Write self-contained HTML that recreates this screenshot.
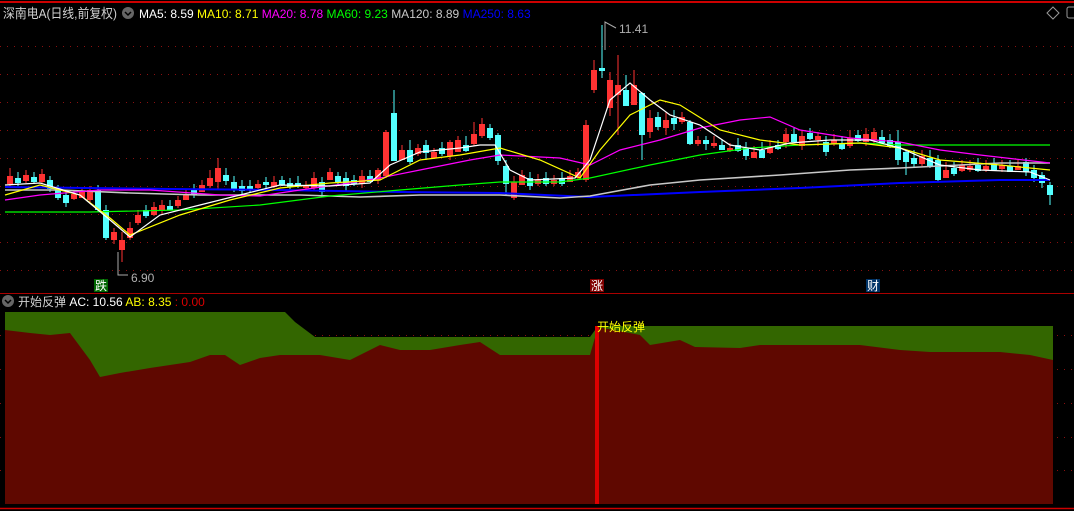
<!DOCTYPE html>
<html><head><meta charset="utf-8"><style>
html,body{margin:0;padding:0;background:#000;width:1074px;height:511px;overflow:hidden}
svg{display:block}
text{font-family:"Liberation Sans","Noto Sans CJK SC",sans-serif}
.r{fill:#ff3232}.c{fill:#54ffff}
</style></head><body>
<svg width="1074" height="511" xmlns="http://www.w3.org/2000/svg">
<rect width="1074" height="511" fill="#000"/>
<line x1="0" y1="2" x2="1074" y2="2" stroke="#c00" stroke-width="2"/>
<g stroke="#8a1010" stroke-width="1" stroke-dasharray="1,6">
<line x1="0" y1="46.5" x2="1074" y2="46.5"/><line x1="0" y1="74.5" x2="1074" y2="74.5"/>
<line x1="0" y1="102.5" x2="1074" y2="102.5"/><line x1="0" y1="130.5" x2="1074" y2="130.5"/>
<line x1="0" y1="158.5" x2="1074" y2="158.5"/><line x1="0" y1="186.5" x2="1074" y2="186.5"/>
<line x1="0" y1="214.5" x2="1074" y2="214.5"/><line x1="0" y1="242.5" x2="1074" y2="242.5"/>
<line x1="0" y1="270.5" x2="1074" y2="270.5"/>
<line x1="0" y1="335.5" x2="1074" y2="335.5"/><line x1="0" y1="369.5" x2="1074" y2="369.5"/>
<line x1="0" y1="403.5" x2="1074" y2="403.5"/><line x1="0" y1="437.5" x2="1074" y2="437.5"/>
<line x1="0" y1="470.5" x2="1074" y2="470.5"/>
</g>
<path stroke="#ff3232" fill="none" d="M10 168V186M26 170V183M42 169V184M74 190V200M82 188V198M90 186V202M114 228V244M122 232V262M130 222V240M138 210V225M154 202V216M162 200V214M178 196V208M186 190V200M202 180V192M210 170V188M218 158V190M258 180V190M274 176V188M306 181V189M314 172V190M330 168V180M362 170V188M378 168V184M386 130V178M402 145V158M418 144V156M434 148V158M450 140V160M458 136V150M474 122V146M482 118V138M514 176V200M522 170V185M538 174V186M554 175V186M570 170V182M578 168V180M586 120V182M594 60V93M610 72V116M618 55V135M634 70V100M650 110V138M666 112V135M682 112V124M698 136V146M714 136V148M730 143V152M754 146V158M770 140V154M786 128V148M802 130V150M818 132V146M834 134V146M850 130V148M866 128V146M874 128V144M922 150V166M946 162V178M962 160V172M970 160V172M986 160V172M1002 160V172M1018 160V170"/>
<path stroke="#54ffff" fill="none" d="M18 172V186M34 172V184M50 176V192M58 185V200M66 192V207M98 185V212M106 205V240M146 205V218M170 200V210M194 184V198M226 168V185M234 176V192M242 180V194M250 180V192M266 177V189M282 176V186M290 178V189M298 176V188M322 177V196M338 172V186M346 172V192M354 175V186M370 170V182M394 90V140M410 140V164M426 140V160M442 142V156M466 136V152M490 124V140M498 133V165M506 160V196M530 172V190M546 172V186M562 172V186M602 25V78M626 75V105M642 92V160M658 112V130M674 110V130M690 120V145M706 136V150M722 140V150M738 138V152M746 142V160M762 142V158M778 140V150M794 128V142M810 128V140M826 136V156M842 136V150M858 130V142M882 130V142M890 134V148M898 130V165M906 150V175M914 150V168M930 150V168M938 155V182M954 162V176M978 158V172M994 158V170M1010 160V172M1026 158V176M1034 165V182M1042 172V188M1050 182V205"/>
<g>
<rect class="r" x="7" y="176" width="6" height="8"/><rect class="c" x="15" y="178" width="6" height="5"/><rect class="r" x="23" y="175" width="6" height="6"/><rect class="c" x="31" y="177" width="6" height="5"/><rect class="r" x="39" y="174" width="6" height="8"/><rect class="c" x="47" y="180" width="6" height="9"/><rect class="c" x="55" y="188" width="6" height="10"/><rect class="c" x="63" y="195" width="6" height="8"/><rect class="r" x="71" y="194" width="6" height="5"/><rect class="r" x="79" y="192" width="6" height="6"/><rect class="r" x="87" y="190" width="6" height="10"/><rect class="c" x="95" y="190" width="6" height="20"/><rect class="c" x="103" y="210" width="6" height="28"/><rect class="r" x="111" y="232" width="6" height="8"/><rect class="r" x="119" y="240" width="6" height="10"/><rect class="r" x="127" y="228" width="6" height="10"/><rect class="r" x="135" y="215" width="6" height="8"/><rect class="c" x="143" y="210" width="6" height="6"/><rect class="r" x="151" y="207" width="6" height="8"/><rect class="r" x="159" y="205" width="6" height="6"/><rect class="c" x="167" y="206" width="6" height="4"/><rect class="r" x="175" y="200" width="6" height="6"/><rect class="r" x="183" y="194" width="6" height="6"/><rect class="c" x="191" y="190" width="6" height="5"/><rect class="r" x="199" y="185" width="6" height="7"/><rect class="r" x="207" y="178" width="6" height="8"/><rect class="r" x="215" y="168" width="6" height="14"/><rect class="c" x="223" y="175" width="6" height="6"/><rect class="c" x="231" y="182" width="6" height="8"/><rect class="c" x="239" y="186" width="6" height="5"/><rect class="c" x="247" y="186" width="6" height="3"/><rect class="r" x="255" y="184" width="6" height="4"/><rect class="c" x="263" y="182" width="6" height="3"/><rect class="r" x="271" y="182" width="6" height="5"/><rect class="c" x="279" y="180" width="6" height="5"/><rect class="c" x="287" y="183" width="6" height="4"/><rect class="c" x="295" y="183" width="6" height="3"/><rect class="r" x="303" y="185" width="6" height="3"/><rect class="r" x="311" y="178" width="6" height="10"/><rect class="c" x="319" y="182" width="6" height="10"/><rect class="r" x="327" y="172" width="6" height="8"/><rect class="c" x="335" y="176" width="6" height="6"/><rect class="c" x="343" y="178" width="6" height="8"/><rect class="c" x="351" y="180" width="6" height="4"/><rect class="r" x="359" y="176" width="6" height="8"/><rect class="c" x="367" y="176" width="6" height="6"/><rect class="r" x="375" y="170" width="6" height="10"/><rect class="r" x="383" y="132" width="6" height="44"/><rect class="c" x="391" y="113" width="6" height="48"/><rect class="r" x="399" y="150" width="6" height="10"/><rect class="c" x="407" y="150" width="6" height="12"/><rect class="r" x="415" y="148" width="6" height="6"/><rect class="c" x="423" y="145" width="6" height="8"/><rect class="r" x="431" y="152" width="6" height="6"/><rect class="c" x="439" y="148" width="6" height="6"/><rect class="r" x="447" y="142" width="6" height="14"/><rect class="r" x="455" y="140" width="6" height="12"/><rect class="c" x="463" y="145" width="6" height="6"/><rect class="r" x="471" y="134" width="6" height="10"/><rect class="r" x="479" y="124" width="6" height="12"/><rect class="c" x="487" y="128" width="6" height="10"/><rect class="c" x="495" y="135" width="6" height="26"/><rect class="c" x="503" y="166" width="6" height="18"/><rect class="r" x="511" y="182" width="6" height="16"/><rect class="r" x="519" y="175" width="6" height="10"/><rect class="c" x="527" y="178" width="6" height="8"/><rect class="r" x="535" y="180" width="6" height="4"/><rect class="c" x="543" y="178" width="6" height="6"/><rect class="r" x="551" y="180" width="6" height="4"/><rect class="c" x="559" y="178" width="6" height="6"/><rect class="r" x="567" y="176" width="6" height="6"/><rect class="r" x="575" y="172" width="6" height="6"/><rect class="r" x="583" y="125" width="6" height="55"/><rect class="r" x="591" y="70" width="6" height="20"/><rect class="c" x="599" y="68" width="6" height="3"/><rect class="r" x="607" y="80" width="6" height="28"/><rect class="r" x="615" y="85" width="6" height="10"/><rect class="c" x="623" y="90" width="6" height="16"/><rect class="r" x="631" y="85" width="6" height="20"/><rect class="c" x="639" y="93" width="6" height="42"/><rect class="r" x="647" y="118" width="6" height="14"/><rect class="c" x="655" y="117" width="6" height="10"/><rect class="r" x="663" y="120" width="6" height="8"/><rect class="c" x="671" y="118" width="6" height="6"/><rect class="r" x="679" y="117" width="6" height="5"/><rect class="c" x="687" y="122" width="6" height="22"/><rect class="r" x="695" y="140" width="6" height="4"/><rect class="c" x="703" y="140" width="6" height="4"/><rect class="r" x="711" y="143" width="6" height="3"/><rect class="c" x="719" y="145" width="6" height="5"/><rect class="r" x="727" y="148" width="6" height="3"/><rect class="c" x="735" y="145" width="6" height="6"/><rect class="c" x="743" y="148" width="6" height="8"/><rect class="r" x="751" y="152" width="6" height="6"/><rect class="c" x="759" y="150" width="6" height="8"/><rect class="r" x="767" y="147" width="6" height="6"/><rect class="c" x="775" y="145" width="6" height="4"/><rect class="r" x="783" y="134" width="6" height="8"/><rect class="c" x="791" y="134" width="6" height="8"/><rect class="r" x="799" y="136" width="6" height="10"/><rect class="c" x="807" y="133" width="6" height="6"/><rect class="r" x="815" y="136" width="6" height="4"/><rect class="c" x="823" y="142" width="6" height="10"/><rect class="r" x="831" y="140" width="6" height="4"/><rect class="c" x="839" y="143" width="6" height="6"/><rect class="r" x="847" y="138" width="6" height="8"/><rect class="c" x="855" y="135" width="6" height="6"/><rect class="r" x="863" y="134" width="6" height="8"/><rect class="r" x="871" y="132" width="6" height="8"/><rect class="c" x="879" y="137" width="6" height="6"/><rect class="c" x="887" y="140" width="6" height="6"/><rect class="c" x="895" y="142" width="6" height="18"/><rect class="c" x="903" y="152" width="6" height="10"/><rect class="c" x="911" y="158" width="6" height="6"/><rect class="r" x="919" y="156" width="6" height="8"/><rect class="c" x="927" y="158" width="6" height="8"/><rect class="c" x="935" y="160" width="6" height="20"/><rect class="r" x="943" y="170" width="6" height="8"/><rect class="c" x="951" y="168" width="6" height="6"/><rect class="r" x="959" y="165" width="6" height="6"/><rect class="r" x="967" y="166" width="6" height="4"/><rect class="c" x="975" y="165" width="6" height="6"/><rect class="r" x="983" y="166" width="6" height="4"/><rect class="c" x="991" y="164" width="6" height="6"/><rect class="r" x="999" y="165" width="6" height="4"/><rect class="c" x="1007" y="166" width="6" height="6"/><rect class="r" x="1015" y="166" width="6" height="4"/><rect class="c" x="1023" y="162" width="6" height="10"/><rect class="c" x="1031" y="170" width="6" height="8"/><rect class="c" x="1039" y="175" width="6" height="8"/><rect class="c" x="1047" y="185" width="6" height="10"/>
</g>
<g fill="none" stroke-width="1.2">
<polyline stroke="#0000ff" stroke-width="2" points="5,187 170,189 280,190 400,192 500,193 590,197 700,192 800,188 900,183 1000,180 1050,180"/>
<polyline stroke="#c8c8c8" stroke-width="1.6" points="5,190 60,190 130,193 200,195 300,195 360,197 420,195 500,195 560,198 590,196 650,185 700,180 780,175 850,170 900,168 1000,163 1050,163"/>
<polyline stroke="#00ff00" points="5,212 90,212 180,210 260,205 330,196 400,190 460,185 500,182 560,182 590,178 650,165 700,155 750,148 800,145 860,143 900,145 1050,145"/>
<polyline stroke="#ff00ff" points="5,200 40,195 100,190 150,190 220,195 260,196 300,190 350,183 380,178 420,170 470,160 500,155 560,158 590,165 620,150 660,140 700,128 740,120 770,117 800,130 850,138 900,142 940,150 980,155 1050,163"/>
<polyline stroke="#ffff00" points="5,195 40,185 80,195 110,218 130,235 180,215 230,200 280,188 330,183 380,180 420,160 460,155 500,148 540,160 580,178 600,150 630,115 660,100 680,105 720,130 760,140 800,145 860,143 900,148 940,160 1000,165 1050,170"/>
<polyline stroke="#ffffff" points="5,185 40,183 80,195 110,220 130,237 160,215 200,205 240,195 280,185 330,186 370,183 390,165 420,152 460,148 480,145 495,145 510,170 530,180 575,178 590,160 610,100 630,83 650,100 670,115 700,125 730,145 760,150 790,143 830,140 870,140 900,148 940,165 980,170 1030,172 1050,180"/>
</g>
<polyline fill="none" stroke="#aaa" points="118,252 118,275 128,275"/>
<text x="131" y="282" fill="#b0b0b0" font-size="12">6.90</text>
<polyline fill="none" stroke="#aaa" points="605,50 605,22 616,28"/>
<text x="619" y="33" fill="#b0b0b0" font-size="12">11.41</text>
<rect x="94" y="279" width="14" height="13" fill="#006600"/><text x="95" y="290" fill="#fff" font-size="12">跌</text>
<rect x="590" y="279" width="14" height="13" fill="#800000"/><text x="591" y="290" fill="#fff" font-size="12">涨</text>
<rect x="866" y="279" width="14" height="13" fill="#003366"/><text x="867" y="290" fill="#fff" font-size="12">财</text>
<line x1="0" y1="293.5" x2="1074" y2="293.5" stroke="#a00" stroke-width="1"/>
<text x="3" y="18" font-size="13" fill="#d0d0d0" textLength="114" lengthAdjust="spacingAndGlyphs">深南电A(日线,前复权)</text>
<circle cx="128" cy="13" r="6" fill="#666"/><path d="M125,12 L128,15 L131,12" stroke="#000" stroke-width="1.5" fill="none"/>
<text x="139" y="18" font-size="12"><tspan fill="#fff">MA5: 8.59 </tspan><tspan fill="#ffff00">MA10: 8.71 </tspan><tspan fill="#ff00ff">MA20: 8.78 </tspan><tspan fill="#00ff00">MA60: 9.23 </tspan><tspan fill="#c8c8c8">MA120: 8.89 </tspan><tspan fill="#0000ff">MA250: 8.63</tspan></text>
<path d="M1053,7 L1059,13 L1053,19 L1047,13 Z" stroke="#999" fill="none"/>
<rect x="1067" y="7" width="10" height="11" rx="2" stroke="#999" fill="none"/>
<circle cx="8" cy="301" r="6" fill="#666"/><path d="M5,300 L8,303 L11,300" stroke="#000" stroke-width="1.5" fill="none"/>
<text x="18" y="306" font-size="12"><tspan fill="#d0d0d0">开始反弹  </tspan><tspan fill="#fff">AC: 10.56  </tspan><tspan fill="#ffff00">AB: 8.35  </tspan><tspan fill="#d00">: 0.00</tspan></text>
<polygon fill="#336600" points="5,312 285,312 295,322 315,337 590,337 598,326 1053,326 1053,504 5,504"/>
<polygon fill="#5f0800" points="5,330 30,333 50,335 70,333 90,360 100,377 120,373 150,368 190,362 210,355 225,355 240,365 260,358 280,355 320,355 350,360 380,345 400,350 430,350 460,345 480,342 500,355 520,355 590,355 598,327 640,335 650,345 680,340 695,347 740,348 760,345 800,345 860,345 900,350 930,352 1000,352 1030,355 1053,360 1053,504 5,504"/>
<rect x="595" y="326" width="4" height="178" fill="#dd0000"/>
<text x="597" y="331" fill="#ffff00" font-size="12">开始反弹</text>
<line x1="0" y1="508.5" x2="1074" y2="508.5" stroke="#c00" stroke-width="1.5"/>
</svg>
</body></html>
